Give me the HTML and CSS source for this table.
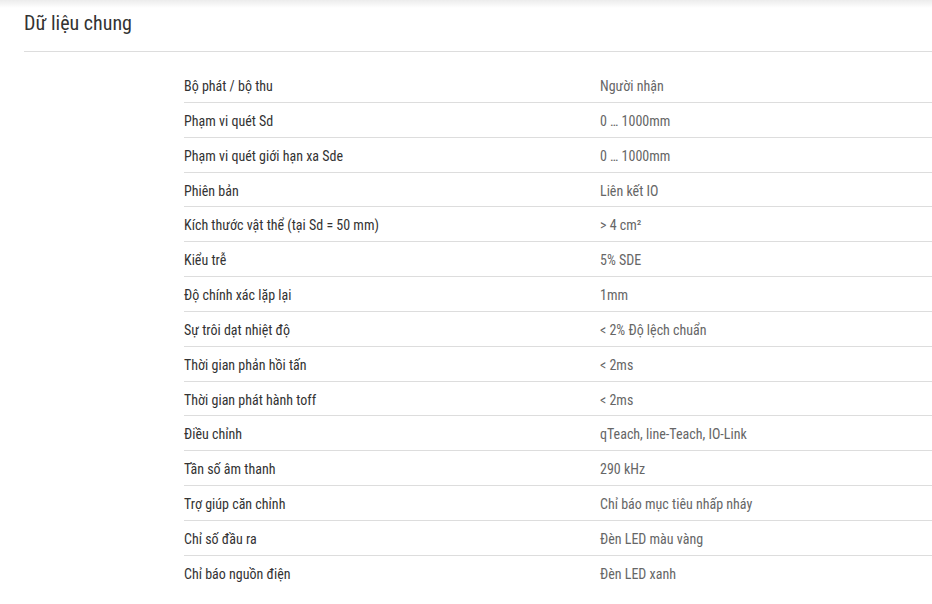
FILE: index.html
```html
<!DOCTYPE html>
<html lang="vi">
<head>
<meta charset="utf-8">
<link rel="stylesheet" href="styles.css">
</head>
<body>
<div class="shade"></div>
<section class="panel">
  <h2 class="title">Dữ liệu chung</h2>
  <div class="table">
    <div class="row"><div class="k">Bộ phát / bộ thu</div><div class="v">Người nhận</div></div>
    <div class="row"><div class="k">Phạm vi quét Sd</div><div class="v">0 … 1000mm</div></div>
    <div class="row"><div class="k">Phạm vi quét giới hạn xa Sde</div><div class="v">0 … 1000mm</div></div>
    <div class="row"><div class="k">Phiên bản</div><div class="v">Liên kết IO</div></div>
    <div class="row"><div class="k">Kích thước vật thể (tại Sd = 50 mm)</div><div class="v">&gt; 4 cm²</div></div>
    <div class="row"><div class="k">Kiểu trễ</div><div class="v">5% SDE</div></div>
    <div class="row"><div class="k">Độ chính xác lặp lại</div><div class="v">1mm</div></div>
    <div class="row"><div class="k">Sự trôi dạt nhiệt độ</div><div class="v">&lt; 2% Độ lệch chuẩn</div></div>
    <div class="row"><div class="k">Thời gian phản hồi tấn</div><div class="v">&lt; 2ms</div></div>
    <div class="row"><div class="k">Thời gian phát hành toff</div><div class="v">&lt; 2ms</div></div>
    <div class="row"><div class="k">Điều chỉnh</div><div class="v">qTeach, line-Teach, IO-Link</div></div>
    <div class="row"><div class="k">Tần số âm thanh</div><div class="v">290 kHz</div></div>
    <div class="row"><div class="k">Trợ giúp căn chỉnh</div><div class="v">Chỉ báo mục tiêu nhấp nháy</div></div>
    <div class="row"><div class="k">Chỉ số đầu ra</div><div class="v">Đèn LED màu vàng</div></div>
    <div class="row last"><div class="k">Chỉ báo nguồn điện</div><div class="v">Đèn LED xanh</div></div>
  </div>
</section>
</body>
</html>
```
FILE: styles.css
```css
html, body {
  margin: 0;
  padding: 0;
  background: #fff;
}
body {
  font-family: Roboto, "Noto Sans", sans-serif;
  font-stretch: condensed;
  color: #333;
  overflow: hidden;
}
.shade {
  height: 8px;
  background: linear-gradient(#ececec, #fff);
}
.panel {
  padding: 0 0 0 24px;
}
.title {
  margin: 0;
  padding: 2px 0 0;
  font-size: 20px;
  font-weight: 400;
  line-height: 26px;
  color: #333;
  height: 41px;
  border-bottom: 1px solid #ddd;
}
.table {
  padding: 16px 0 0 160px;
}
.row {
  display: flex;
  border-bottom: 1px solid #ddd;
  font-size: 14px;
  line-height: 20px;
  padding: 8px 0 5.85px;
}
.row.last {
  border-bottom: none;
}
.k {
  width: 416px;
  color: #333;
}
.v {
  color: #666;
}
```
